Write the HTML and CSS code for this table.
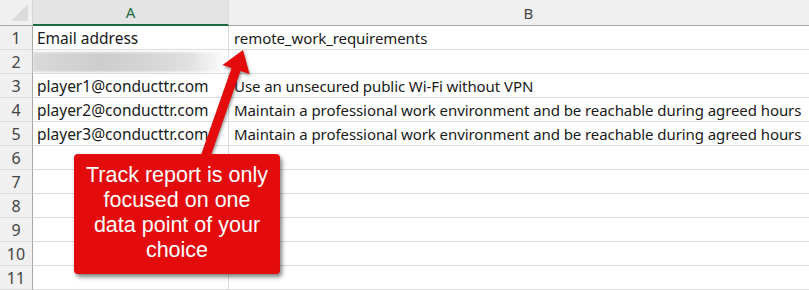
FILE: index.html
```html
<!DOCTYPE html>
<html lang="en">

<head>
    <meta charset="UTF-8">
    <meta name="viewport" content="width=device-width, initial-scale=1.0">
    <title>Track report</title>
    <link rel="stylesheet" href="styles.css">
</head>

<body>
    <div class="sheet">
        <div class="corner"><span class="tri"></span></div>
        <div class="colhead selected">A</div>
        <div class="colhead">B</div>

        <div class="rownum">1</div>
        <div class="cell">Email address</div>
        <div class="cell">remote_work_requirements</div>

        <div class="rownum">2</div>
        <div class="cell"><div class="redacted"></div></div>
        <div class="cell"></div>

        <div class="rownum">3</div>
        <div class="cell">player1@conducttr.com</div>
        <div class="cell">Use an unsecured public Wi-Fi without VPN</div>

        <div class="rownum">4</div>
        <div class="cell">player2@conducttr.com</div>
        <div class="cell">Maintain a professional work environment and be reachable during agreed hours</div>

        <div class="rownum">5</div>
        <div class="cell">player3@conducttr.com</div>
        <div class="cell">Maintain a professional work environment and be reachable during agreed hours</div>

        <div class="rownum">6</div><div class="cell"></div><div class="cell"></div>
        <div class="rownum">7</div><div class="cell"></div><div class="cell"></div>
        <div class="rownum">8</div><div class="cell"></div><div class="cell"></div>
        <div class="rownum">9</div><div class="cell"></div><div class="cell"></div>
        <div class="rownum">10</div><div class="cell"></div><div class="cell"></div>
        <div class="rownum">11</div><div class="cell"></div><div class="cell"></div>
    </div>

    <!-- annotation layer -->
    <svg class="arrow" width="809" height="290" viewBox="0 0 809 290">
        <polygon points="243,50 249.5,74 240.5,71 210,158 201,155 231.5,68 222.5,65" />
    </svg>
    <div class="callout">
        <p>Track report is only<br>focused on one<br>data point of your<br>choice</p>
    </div>
</body>

</html>
```

FILE: styles.css
```css
* {
    margin: 0;
    padding: 0;
    box-sizing: border-box;
}

body {
    width: 809px;
    height: 290px;
    overflow: hidden;
    background: #fff;
    font-family: 'Noto Sans', sans-serif;
    position: relative;
}

.sheet {
    display: grid;
    grid-template-columns: 33px 196px 600px;
    grid-template-rows: 26px repeat(11, 24px);
    width: 829px;
}

.corner {
    background: #f0f0f0;
    border-right: 1px solid #d4d4d4;
    border-bottom: 1px solid #a8a8a8;
    position: relative;
}

.tri {
    position: absolute;
    right: 4px;
    bottom: 4px;
    width: 0;
    height: 0;
    border-left: 17px solid transparent;
    border-bottom: 17px solid #dcdcdc;
}

.colhead {
    background: #f0f0f0;
    border-right: 1px solid #dadada;
    border-bottom: 1px solid #a8a8a8;
    display: flex;
    justify-content: center;
    align-items: center;
    font-size: 15px;
    color: #444;
}

.colhead.selected {
    background: #e4e4e4;
    color: #1e6b41;
    border-bottom: 2px solid #1e6b41;
}

.rownum {
    background: #f0f0f0;
    border-right: 1px solid #a8a8a8;
    border-bottom: 1px solid #dadada;
    display: flex;
    justify-content: center;
    align-items: center;
    font-size: 16px;
    color: #444;
}

.cell {
    border-right: 1px solid #dadada;
    border-bottom: 1px solid #dadada;
    font-size: 15px;
    color: #1a1a1a;
    padding: 0 5px;
    display: flex;
    align-items: center;
    white-space: nowrap;
    overflow: visible;
    letter-spacing: -0.08px;
}

.cell:nth-child(3n+2) {
    padding-left: 4px;
    font-size: 15.5px;
    letter-spacing: 0;
}

.redacted {
    margin: 0 -5px 0 -4px;
    height: 20px;
    flex: 1;
    background: linear-gradient(90deg, #d9d9d9 0%, #cdcdcd 35%, #d6d6d6 60%, #e0e0e0 80%, #ffffff 100%);
    filter: blur(1px);
}

.arrow {
    position: absolute;
    left: 0;
    top: 0;
    pointer-events: none;
}

.arrow polygon {
    fill: #e30b0b;
    filter: drop-shadow(1px 2px 1.5px rgba(0, 0, 0, 0.4));
}

.callout {
    position: absolute;
    left: 74px;
    top: 154px;
    width: 206px;
    height: 120px;
    background: #e30b0b;
    border-radius: 4px;
    box-shadow: 2px 3px 4px rgba(0, 0, 0, 0.5);
    display: flex;
    justify-content: center;
    align-items: center;
    padding-bottom: 2px;
}

.callout p {
    font-family: 'Liberation Sans', Arial, sans-serif;
    font-size: 21.5px;
    line-height: 25px;
    color: #fff;
    text-align: center;
}
```
